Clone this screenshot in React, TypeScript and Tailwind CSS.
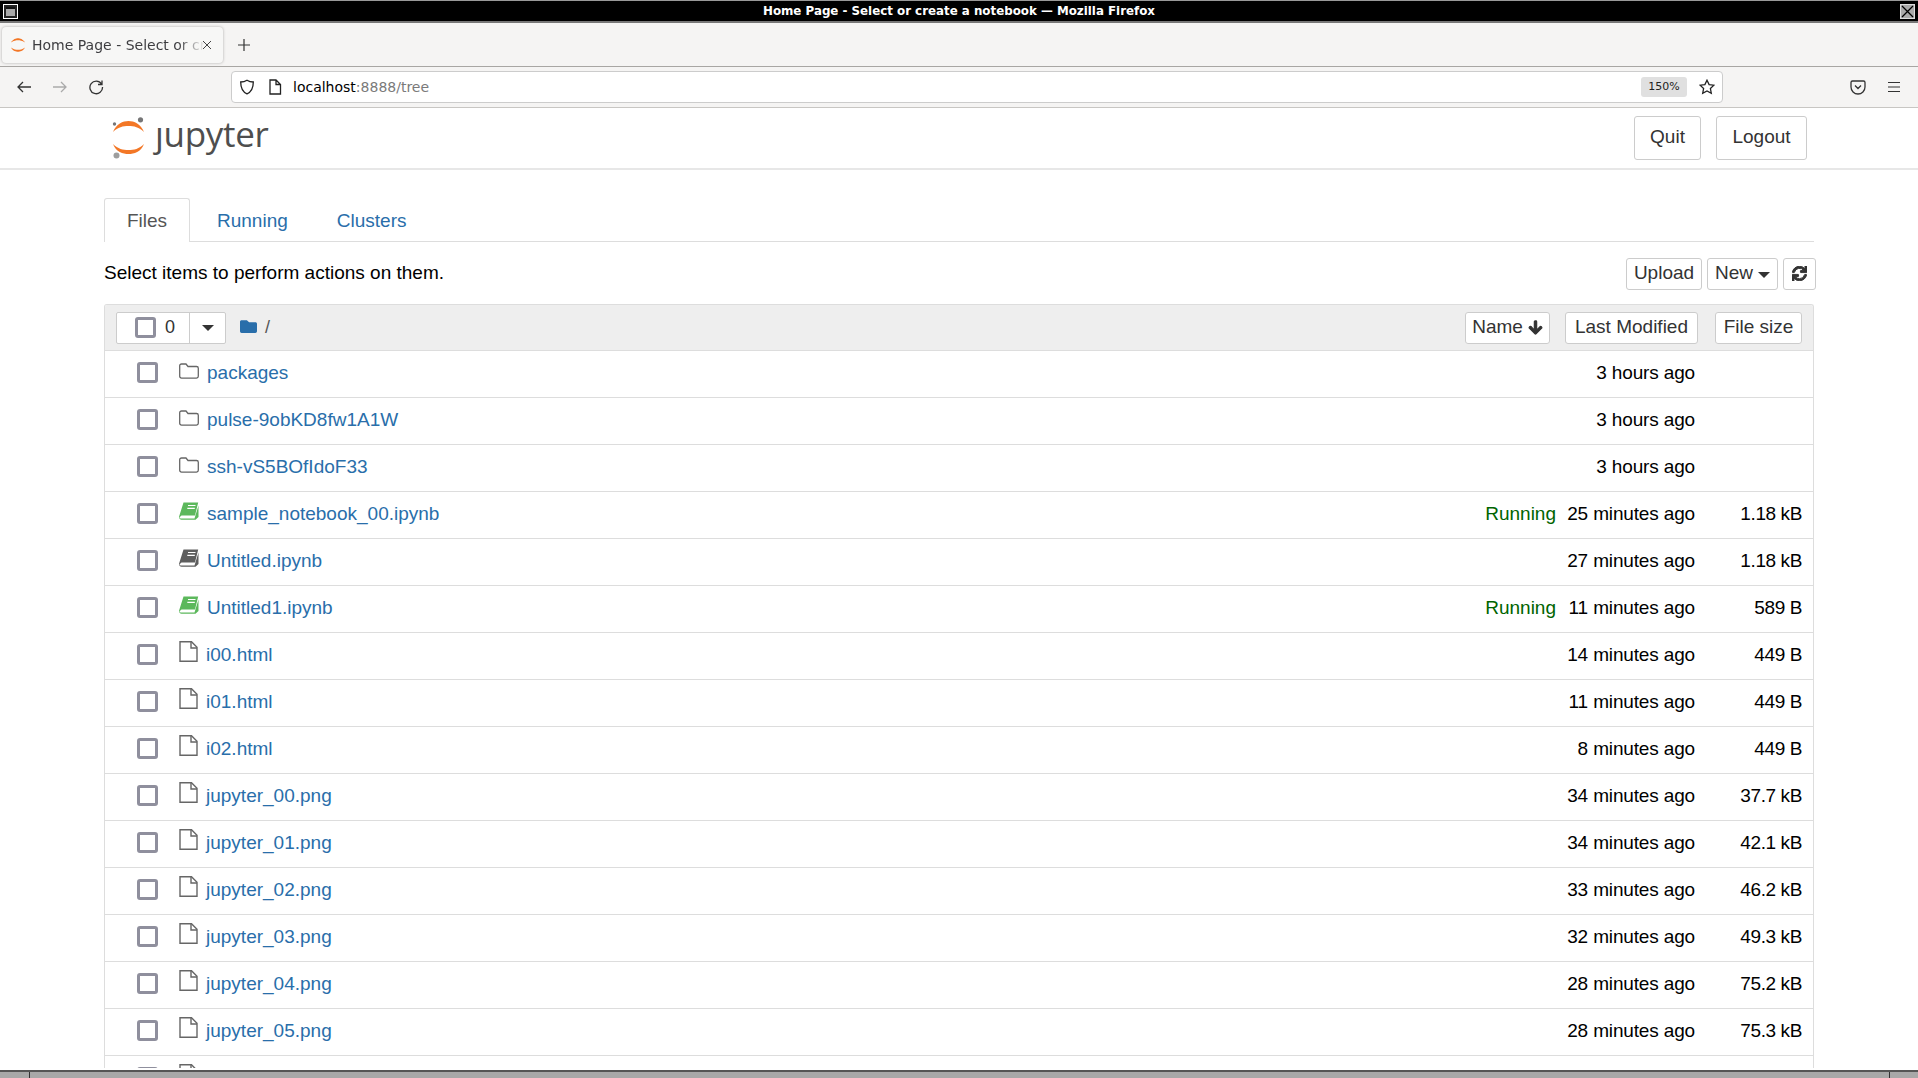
import { FaArrowDown, FaFolder, FaSync } from "react-icons/fa";

type Kind = "folder" | "book" | "file";

const rows: { name: string; kind: Kind; time: string; size?: string; running?: boolean }[] = [
  { name: "packages", kind: "folder", time: "3 hours ago" },
  { name: "pulse-9obKD8fw1A1W", kind: "folder", time: "3 hours ago" },
  { name: "ssh-vS5BOfIdoF33", kind: "folder", time: "3 hours ago" },
  { name: "sample_notebook_00.ipynb", kind: "book", time: "25 minutes ago", size: "1.18 kB", running: true },
  { name: "Untitled.ipynb", kind: "book", time: "27 minutes ago", size: "1.18 kB" },
  { name: "Untitled1.ipynb", kind: "book", time: "11 minutes ago", size: "589 B", running: true },
  { name: "i00.html", kind: "file", time: "14 minutes ago", size: "449 B" },
  { name: "i01.html", kind: "file", time: "11 minutes ago", size: "449 B" },
  { name: "i02.html", kind: "file", time: "8 minutes ago", size: "449 B" },
  { name: "jupyter_00.png", kind: "file", time: "34 minutes ago", size: "37.7 kB" },
  { name: "jupyter_01.png", kind: "file", time: "34 minutes ago", size: "42.1 kB" },
  { name: "jupyter_02.png", kind: "file", time: "33 minutes ago", size: "46.2 kB" },
  { name: "jupyter_03.png", kind: "file", time: "32 minutes ago", size: "49.3 kB" },
  { name: "jupyter_04.png", kind: "file", time: "28 minutes ago", size: "75.2 kB" },
  { name: "jupyter_05.png", kind: "file", time: "28 minutes ago", size: "75.3 kB" },
  { name: "", kind: "file", time: "" },
];

function JupyterMark({ className }: { className: string }) {
  return (
    <svg viewBox="0 0 34 42" className={className}>
      <path d="M1 15C4 7 11 4 16.5 4S29 7 32 15C27 10 22 9 16.5 9S6 10 1 15Z" fill="#f37726" />
      <path d="M1 27C6 32 11 33 16.5 33S27 32 32 27C29 35 22 37 16.5 37S4 35 1 27Z" fill="#f37726" />
      <circle cx="28.5" cy="2.8" r="2.6" fill="#767677" />
      <circle cx="2.5" cy="7" r="1.7" fill="#767677" />
      <circle cx="4.5" cy="38.5" r="3" fill="#9e9e9e" />
    </svg>
  );
}

function Favicon() {
  return (
    <svg viewBox="0 0 16 16" className="w-[16px] h-[16px] shrink-0">
      <path d="M1 5.500C3 2 6 1.200 8 1.200S13 2 15 5.500C12 3.500 10 3.200 8 3.200S4 3.500 1 5.500Z" fill="#f37726" />
      <path d="M1 10.500C4 12.500 6 12.800 8 12.800S12 12.500 15 10.500C13 14 10 14.800 8 14.800S3 14 1 10.500Z" fill="#f37726" />
    </svg>
  );
}

function FolderOutline() {
  return (
    <svg viewBox="0 0 20 16" className="w-5 h-4 mb-[6px]" fill="none" stroke="#666" strokeWidth="1.3">
      <path d="M2.500 1H7l2 2.500h8.500a1.800 1.800 0 0 1 1.800 1.800v8a1.800 1.800 0 0 1-1.800 1.800h-15A1.800 1.800 0 0 1 .7 13.300V2.800A1.800 1.800 0 0 1 2.500 1Z" />
    </svg>
  );
}

function FileOutline() {
  return (
    <svg viewBox="0 0 19 21" className="w-[19px] h-[21px] mb-[9px]" fill="none" stroke="#666" strokeWidth="1.4">
      <path d="M1 .8h11.500L18 6.300V20.200H1Z" />
      <path d="M12 1v6h6" />
    </svg>
  );
}

function BookIcon({ color }: { color: string }) {
  return (
    <svg viewBox="0 0 20 18" className="w-5 h-[18px] mb-[7px]">
      <path d="M4.500.500H19.200L16 13.500H2.500L.800 15C.500 16 1.300 16.500 2.300 16.500H15.500L19.500 3.500V15L16.500 17.700H2.500C1 17.700-.200 16.500.100 14.500Z" fill={color} />
      <path d="M9 3.500h7.500M8.300 6.300h7.500" stroke="#fff" strokeWidth="1.200" />
    </svg>
  );
}

function RowIcon({ kind, running }: { kind: Kind; running?: boolean }) {
  if (kind === "folder") return <FolderOutline />;
  if (kind === "file") return <FileOutline />;
  return <BookIcon color={running ? "#5cb85c" : "#5e5e5e"} />;
}

function Check({ className = "" }: { className?: string }) {
  return (
    <input
      type="checkbox"
      readOnly
      className={`appearance-none block w-[21px] h-[21px] border-[3px] border-[#8f8f9d] rounded-[3px] bg-white ${className}`}
    />
  );
}

function Caret({ className = "" }: { className?: string }) {
  return <span className={`inline-block w-0 h-0 border-x-[6px] border-x-transparent border-t-[6px] border-t-[#333] ${className}`} />;
}

function ToolButton({ children, className = "" }: { children: React.ReactNode; className?: string }) {
  return (
    <div className={`h-[32px] flex items-center justify-center bg-white border border-[#ccc] rounded-[3px] text-[#333] ${className}`}>
      {children}
    </div>
  );
}

function FileRow({ row }: { row: (typeof rows)[number] }) {
  return (
    <div className="h-[47px] shrink-0 flex items-center border-b border-[#ddd] pl-[32px] pr-[11px] pb-[1px]">
      <Check className="mb-[2px]" />
      <div className={`ml-[21px] shrink-0 flex items-center ${row.kind === "file" ? "w-[27px]" : "w-[28px]"}`}>
        <RowIcon kind={row.kind} running={row.running} />
      </div>
      <a className="text-[#296eaa] flex-1">{row.name}</a>
      {row.running && <span className="text-[#006400] mr-[9px]">Running</span>}
      <span className="text-black w-[130px] text-right whitespace-nowrap tracking-[-0.15px]">{row.time}</span>
      <span className="text-black w-[107px] text-right whitespace-nowrap tracking-[-0.4px]">{row.size}</span>
    </div>
  );
}

export default function App() {
  return (
    <div className="h-[1078px] w-[1918px] overflow-hidden flex flex-col bg-white font-['Liberation_Sans',Arial,sans-serif] text-[19px]">
      {/* window title */}
      <div className="h-[23px] shrink-0 bg-black border-t border-[#999] border-b-2 border-b-[#777] flex items-center justify-between px-[3px] font-['DejaVu_Sans',sans-serif]">
        <div className="w-[15px] h-[15px] border border-white bg-[#222] p-[2px]">
          <div className="w-full h-full bg-[#aaa] border-t-2 border-[#111]" />
        </div>
        <span className="text-white font-bold text-[11.85px] pt-[2px]">Home Page - Select or create a notebook — Mozilla Firefox</span>
        <div className="w-[15px] h-[15px] bg-[#aaa] border border-[#ddd] flex items-center justify-center">
          <svg viewBox="0 0 13 13" className="w-[13px] h-[13px]" stroke="#000" strokeWidth="1.300">
            <path d="M1 1l11 11M12 1L1 12" />
          </svg>
        </div>
      </div>

      {/* tab strip */}
      <div className="h-[44px] shrink-0 bg-[#f5f4f3] border-b border-[#a8a6a3] flex items-center pl-[2px] font-['DejaVu_Sans',sans-serif] text-[14px] text-[#3d3d40]">
        <div className="w-[221px] h-[36px] bg-[#f7f7f6] rounded-[4px] shadow-[0_0_3px_rgba(0,0,0,0.3)] flex items-center pl-[8px]">
          <Favicon />
          <span className="ml-[6px] pt-[1px] w-[173px] overflow-hidden whitespace-nowrap [mask-image:linear-gradient(to_right,black_84%,transparent_100%)]">
            Home Page - Select or create a notebook
          </span>
          <svg viewBox="0 0 10 10" className="w-[10px] h-[10px] -ml-[3px]" stroke="#444" strokeWidth="1">
            <path d="M1 1l8 8M9 1L1 9" />
          </svg>
        </div>
        <svg viewBox="0 0 14 14" className="w-[14px] h-[14px] ml-[14px]" stroke="#333" strokeWidth="1.200">
          <path d="M7 1v12M1 7h12" />
        </svg>
      </div>

      {/* url bar */}
      <div className="h-[41px] shrink-0 bg-[#f5f4f3] border-b border-[#c8c6c3] flex items-center font-['DejaVu_Sans',sans-serif]">
        <svg viewBox="0 0 16 16" className="w-[16px] h-[16px] ml-[16px]" fill="none" stroke="#333" strokeWidth="1.300">
          <path d="M15 8H2M7 3L2 8l5 5" />
        </svg>
        <svg viewBox="0 0 16 16" className="w-[16px] h-[16px] ml-[20px]" fill="none" stroke="#aaa" strokeWidth="1.300">
          <path d="M1 8h13M9 3l5 5-5 5" />
        </svg>
        <svg viewBox="0 0 16 16" className="w-[16px] h-[16px] ml-[20px]" fill="none" stroke="#333" strokeWidth="1.300">
          <path d="M13.500 5A6.300 6.300 0 1 0 14.500 8M14 1.500V5.500H10" />
        </svg>
        <div className="ml-[127px] w-[1492px] h-[32px] bg-white border border-[#ccc] rounded-[4px] flex items-center text-[14px]">
          <svg viewBox="0 0 16 16" className="w-[16px] h-[16px] ml-[7px]" fill="none" stroke="#222" strokeWidth="1.300">
            <path d="M8 1.200C10 2.500 12 3 14.300 3c0 6-1.500 9.800-6.300 11.800C3.200 12.800 1.700 9 1.700 3 4 3 6 2.500 8 1.200Z" />
          </svg>
          <svg viewBox="0 0 14 16" className="w-[14px] h-[16px] ml-[13px]" fill="none" stroke="#222" strokeWidth="1.300">
            <path d="M2 1h6l4.500 4.500V15H2ZM8 1v4.500h4.500" />
          </svg>
          <span className="ml-[11px] text-black">localhost<span className="text-[#7a7a7a]">:8888/tree</span></span>
          <div className="ml-auto w-[46px] h-[20px] bg-[#e0e0e0] rounded-[3px] flex items-center justify-center text-[11px] text-[#222]">150%</div>
          <svg viewBox="0 0 16 16" className="w-[16px] h-[16px] ml-[12px] mr-[7px]" fill="none" stroke="#222" strokeWidth="1.300">
            <path d="M8 1.200l2.100 4.400 4.800.6-3.500 3.300.9 4.800L8 12l-4.300 2.300.9-4.800L1.100 6.200l4.800-.6Z" />
          </svg>
        </div>
        <svg viewBox="0 0 16 16" className="w-[16px] h-[16px] ml-[127px]" fill="none" stroke="#333" strokeWidth="1.300">
          <path d="M2.500 2h11A1.500 1.500 0 0 1 15 3.500V8a7 7 0 0 1-14 0V3.500A1.500 1.500 0 0 1 2.500 2ZM5 6.500l3 3 3-3" />
        </svg>
        <svg viewBox="0 0 14 12" className="w-[14px] h-[12px] ml-[21px]" stroke="#333" strokeWidth="1.200">
          <path d="M1 1.500h12M1 6h12M1 10.500h12" />
        </svg>
      </div>

      {/* jupyter header */}
      <div className="h-[62px] shrink-0 border-b-2 border-[#e7e7e7] flex items-start pl-[112px]">
        <JupyterMark className="w-[34px] h-[42px] mt-[9px]" />
        <span className="ml-[9px] mt-[4px] text-[35px] leading-[44px] text-[#4e4e4e] font-['Open_Sans',sans-serif] tracking-[-0.3px]">ȷupyter</span>
        <div className="ml-auto mt-[8px] mr-[111px] flex gap-[15px] text-[#333]">
          <div className="w-[67px] h-[44px] pb-[2px] border border-[#ccc] rounded-[3px] flex items-center justify-center">Quit</div>
          <div className="w-[91px] h-[44px] pb-[2px] border border-[#ccc] rounded-[3px] flex items-center justify-center">Logout</div>
        </div>
      </div>

      {/* page body */}
      <div className="flex-1 min-h-0 mx-[104px] pt-[28px] flex flex-col">
        <div className="h-[44px] shrink-0 flex border-b border-[#ddd]">
          <div className="w-[86px] h-[44px] pt-[2px] border border-[#ddd] border-b-0 rounded-t-[3px] bg-white text-[#555] flex items-center justify-center">Files</div>
          <div className="ml-[27px] text-[#296eaa] flex items-center h-[47px]">Running</div>
          <div className="ml-[49px] text-[#296eaa] flex items-center h-[47px]">Clusters</div>
        </div>

        <div className="h-[62px] shrink-0 flex items-center text-black pt-[1px]">
          <span>Select items to perform actions on them.</span>
          <div className="ml-auto flex -mr-[2px] gap-[5px]">
            <ToolButton className="w-[76px]">Upload</ToolButton>
            <ToolButton className="w-[71px] gap-[5px]">New <Caret className="mt-[2px] border-x-[5px] border-t-[5px]" /></ToolButton>
            <ToolButton className="w-[33px]"><FaSync className="w-[15px] h-[15px]" stroke="currentColor" strokeWidth={32} /></ToolButton>
          </div>
        </div>

        <div className="flex-1 min-h-0 overflow-hidden border-x border-t border-[#ddd] rounded-t-[3px] mb-[2px]">
          <div className="h-[46px] bg-[#eee] border-b border-[#ddd] flex items-center pl-[11px] pr-[11px]">
            <div className="h-[32px] w-[110px] flex bg-white border border-[#ccc] rounded-[2px] text-[#333]">
              <div className="w-[73px] border-r border-[#ccc] flex items-center pl-[18px]">
                <Check />
                <span className="ml-[9px] text-[18px]">0</span>
              </div>
              <div className="flex-1 flex items-center justify-center"><Caret /></div>
            </div>
            <FaFolder className="ml-[13px] w-[19px] h-[17px] text-[#296eaa] mb-[3px]" />
            <span className="ml-[7px] text-[#555] text-[18px]">/</span>
            <div className="ml-auto flex">
              <ToolButton className="w-[85px] gap-[5px]">Name <FaArrowDown className="w-[15px] h-[15px]" stroke="currentColor" strokeWidth={40} /></ToolButton>
              <ToolButton className="w-[133px] ml-[15px]">Last Modified</ToolButton>
              <ToolButton className="w-[87px] ml-[17px]">File size</ToolButton>
            </div>
          </div>
          {rows.map((r, i) => (
            <FileRow key={i} row={r} />
          ))}
        </div>
      </div>

      {/* horizontal scrollbar */}
      <div className="h-[8px] shrink-0 bg-[#a8a8a8] border-t-2 border-[#555] flex justify-between pl-[29px] pr-[28px]">
        <div className="w-[1px] h-full bg-[#333]" />
        <div className="w-[1px] h-full bg-[#333]" />
      </div>
    </div>
  );
}
